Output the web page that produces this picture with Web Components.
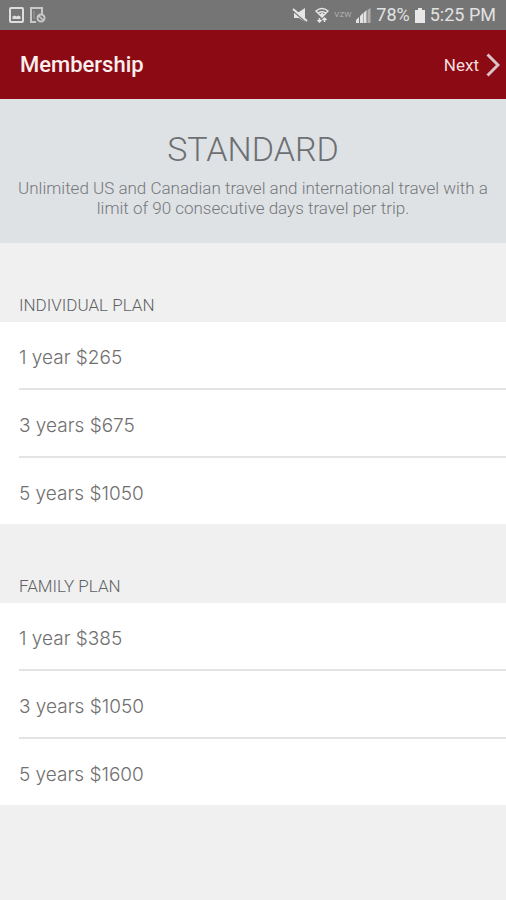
<!DOCTYPE html>
<html lang="en">
<head>
<meta charset="utf-8">
<meta name="viewport" content="width=device-width, initial-scale=1">
<title>Membership</title>
<style>
  body { margin: 0; background: #f0f0f1; font-family: Roboto, "Liberation Sans", sans-serif; }
</style>
</head>
<body>
<membership-page></membership-page>
<script>
const define = (name, html, setup) => {
  const template = document.createElement('template');
  template.innerHTML = html;
  customElements.define(name, class extends HTMLElement {
    constructor() {
      super();
      this.attachShadow({ mode: 'open' }).append(template.content.cloneNode(true));
    }
    connectedCallback() { if (setup) setup(this, this.shadowRoot); }
  });
};

define('status-bar', `
<style>
  :host { display: flex; align-items: center; justify-content: space-between; height: 30px; padding: 0 10px 0 9px; background: #757575; color: #e2e2e2; font-size: 18px; line-height: 30px; }
  div { display: flex; align-items: center; }
  .left { gap: 6px; }
  .right { gap: 5px; }
  .net { font-size: 8px; color: #b4b4b4; }
  svg { display: block; }
</style>
<div class="left">
  <svg width="15" height="16" viewBox="0 0 15 16" fill="none" stroke="#dedede" stroke-width="2"><rect x="1" y="1" width="13" height="14" rx="1"/><path d="M3.5 12V9.500l2-1 2 1 2-1 2 1V12z" fill="#dedede" stroke="none"/></svg>
  <svg width="16" height="16" viewBox="0 0 16 16" fill="none" stroke="#c8c8c8" stroke-width="2"><path d="M6 15H1V1h11v6"/><path d="M4 4v8" stroke-width="1" stroke="#a0a0a0"/><circle cx="11" cy="11" r="3.500"/><path d="M8.500 8.500l5 5" stroke-width="1.500"/></svg>
</div>
<div class="right">
  <svg width="18" height="16" viewBox="0 0 18 16"><path d="M2 5h5l6-4v14l-6-4H2z" fill="#e6e6e6"/><path d="M1 4l14 12" stroke="#757575" stroke-width="1.500"/><path d="M1 2l14 12" stroke="#e6e6e6" stroke-width="2"/></svg>
  <svg width="14" height="16" viewBox="0 0 14 16" fill="none" stroke="#e6e6e6" stroke-width="1.500"><path d="M1 4q6-5 12 0L7 10zM3.500 6q3.500-2.500 7 0"/><path d="M7 5.500L9.500 8 7 10.500 4.500 8z" fill="#e6e6e6" stroke="none"/><path d="M4.500 11v4M2.500 13l2 2 2-2M9.500 15v-4M7.500 13l2-2 2 2"/></svg>
  <span class="net">VZW</span>
  <svg width="15" height="15" viewBox="0 0 15 15"><path d="M0 15v-3l3-3v6zM4 15V8l3-3v10z" fill="#e2e2e2"/><path d="M7.500 15V5l3-3v13z" fill="#e2e2e2"/><path d="M11.500 15V2l3-2v15z" fill="#b0b0b0"/></svg>
  <span>78%</span>
  <svg width="10" height="15" viewBox="0 0 10 15"><path d="M3 0h4v2h3v13H0V2h3z" fill="#e8e8e8"/></svg>
  <span>5:25 PM</span>
</div>`);

define('app-header', `
<style>
  :host { display: flex; align-items: center; justify-content: space-between; height: 69px; padding: 0 6px 0 20px; box-sizing: border-box; background: #8c0a14; color: #fbeeee; }
  h1 { margin: 0; font-size: 22px; line-height: 28px; font-weight: 500; }
  button { display: flex; align-items: center; gap: 7px; padding: 0; border: 0; background: none; color: #f3dede; font: 400 17px/24px Roboto, sans-serif; cursor: pointer; }
</style>
<h1><slot></slot></h1>
<button type="button">Next<svg width="14" height="24" viewBox="0 0 14 24" fill="none" stroke="#d9c4c8" stroke-width="3" aria-hidden="true"><path d="M1.500 1.500L12 12 1.500 22.500"/></svg></button>`);

define('plan-banner', `
<style>
  :host { display: block; padding: 29px 12px 25px; background: #dfe2e5; text-align: center; }
  h2 { margin: 0 0 8px; font-size: 34px; line-height: 42px; font-weight: 300; color: #6d7073; }
  p { margin: 0; font-size: 17px; line-height: 20px; font-weight: 300; color: #75787b; }
</style>
<h2><slot name="title"></slot></h2>
<p><slot></slot></p>`);

define('plan-section', `
<style>
  :host { display: block; }
  h3 { margin: 0; padding: 51px 19px 6px; font-size: 17px; line-height: 22px; font-weight: 300; color: #606264; }
  ul { margin: 0; padding: 0; list-style: none; background: #fff; }
</style>
<h3></h3>
<ul role="list"><slot></slot></ul>`, (el, root) => {
  root.querySelector('h3').textContent = el.getAttribute('heading');
});

define('plan-option', `
<style>
  :host { display: block; padding-left: 19px; }
  button { display: block; width: 100%; padding: 25px 0 19px; border: 0; border-bottom: 2px solid #e4e4e5; background: none; text-align: left; color: #707070; font: 300 19px/22px Inter, "Liberation Sans", sans-serif; cursor: pointer; }
  :host(:last-child) button { border-bottom: 0; }
</style>
<button type="button"><slot></slot></button>`, el => el.setAttribute('role', 'listitem'));

define('membership-page', `
<style>:host { display: block; }</style>
<status-bar></status-bar>
<app-header>Membership</app-header>
<main>
  <plan-banner><span slot="title">STANDARD</span>Unlimited US and Canadian travel and international travel with a limit of 90 consecutive days travel per trip.</plan-banner>
  <plan-section heading="INDIVIDUAL PLAN">
    <plan-option>1 year $265</plan-option>
    <plan-option>3 years $675</plan-option>
    <plan-option>5 years $1050</plan-option>
  </plan-section>
  <plan-section heading="FAMILY PLAN">
    <plan-option>1 year $385</plan-option>
    <plan-option>3 years $1050</plan-option>
    <plan-option>5 years $1600</plan-option>
  </plan-section>
</main>`);
</script>
</body>
</html>
